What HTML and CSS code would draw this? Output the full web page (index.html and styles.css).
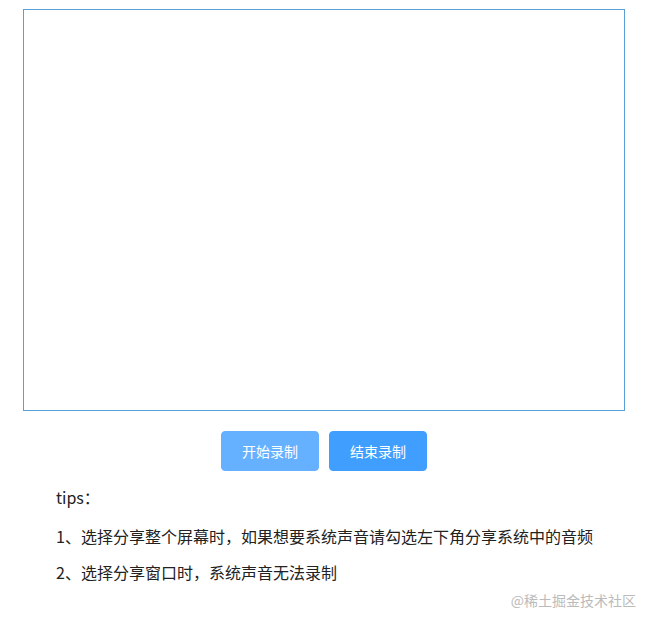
FILE: index.html
```html
<!DOCTYPE html>
<html lang="zh-CN">
<head>
    <meta charset="UTF-8">
    <title>屏幕录制</title>
    <link rel="stylesheet" href="styles.css">
</head>
<body>

    <div class="recorder">
        <!-- Preview area -->
        <video class="preview"></video>

        <div class="actions">
            <button class="btn btn-start">开始录制</button>
            <button class="btn btn-stop">结束录制</button>
        </div>

        <div class="tips">
            <p class="tips-title">tips：</p>
            <p>1、选择分享整个屏幕时，如果想要系统声音请勾选左下角分享系统中的音频</p>
            <p>2、选择分享窗口时，系统声音无法录制</p>
        </div>
    </div>

    <div class="watermark">@稀土掘金技术社区</div>

</body>
</html>
```

FILE: styles.css
```css
body {
    font-family: "Noto Sans CJK SC", "Noto Sans", sans-serif;
    margin: 0;
    padding: 9px 0 0 23px;
    background-color: #fff;
    color: #222;
}

.recorder {
    width: 602px;
}

.preview {
    display: block;
    width: 602px;
    height: 402px;
    box-sizing: border-box;
    border: 1px solid #5a9fd6;
    background-color: #fff;
}

.actions {
    display: flex;
    justify-content: center;
    gap: 10px;
    margin-top: 20px;
}

.btn {
    font-family: inherit;
    font-size: 14px;
    line-height: 14px;
    color: #fff;
    padding: 12px 20px;
    border: 1px solid transparent;
    border-radius: 4px;
    cursor: pointer;
}

.btn-start {
    background-color: #66b1ff;
    border-color: #66b1ff;
}

.btn-stop {
    background-color: #409eff;
    border-color: #409eff;
}

.tips {
    padding-left: 33px;
    margin-top: 16px;
    font-size: 16px;
    line-height: 20px;
}

.tips p {
    margin: 16px 0 0;
}

.tips .tips-title {
    margin: 0 0 19px;
}

.watermark {
    position: absolute;
    right: 17px;
    top: 590px;
    font-size: 14px;
    color: #bbb;
}
```
